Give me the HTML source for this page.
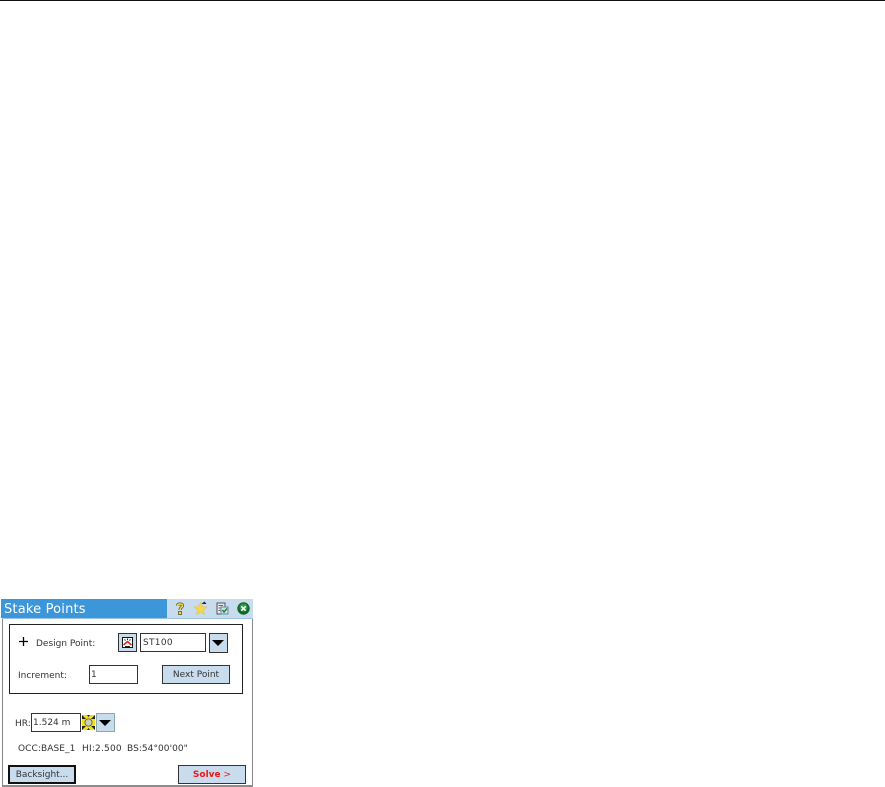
<!DOCTYPE html>
<html>
<head>
<meta charset="utf-8">
<style>
html,body{margin:0;padding:0;background:#fff;width:885px;height:787px;overflow:hidden}
body{position:relative;font-family:"DejaVu Sans","Liberation Sans",sans-serif;color:#333}
.a{position:absolute;box-sizing:border-box}
.t{position:absolute;font-size:9px;line-height:12px;white-space:nowrap;color:#333}
.btn{background:#c9dcee;border:1px solid #333;text-align:center;font-size:9px;color:#333}
.arrow{width:0;height:0;border-left:6px solid transparent;border-right:6px solid transparent;border-top:6px solid #000;position:absolute}
svg{position:absolute}
</style>
</head>
<body>
<div class="a" style="left:0;top:0;width:885px;height:1px;background:#111"></div>

<!-- window -->
<div class="a" style="left:2px;top:599px;width:1px;height:187px;background:#888"></div>
<div class="a" style="left:252px;top:599px;width:1px;height:187px;background:#888"></div>
<div class="a" style="left:2px;top:785px;width:251px;height:2px;background:#8c8c8c"></div>

<!-- title bar -->
<div class="a" style="left:1px;top:599px;width:166px;height:19px;background:#3b97da"></div>
<div class="a" style="left:167px;top:599px;width:86px;height:19px;background:#c9dcee"></div>
<div class="a" style="left:2px;top:618px;width:251px;height:1px;background:#9cc4e4"></div>
<div class="t" style="left:4px;top:601px;font-size:13px;line-height:18px;color:#fff;letter-spacing:.18px">Stake Points</div>

<!-- title icons -->
<svg style="left:174px;top:601px" width="12" height="15" viewBox="0 0 12 15"><path d="M3.500 4.500C3.500 2.500 8.500 2.500 8.500 4.500C8.500 6.500 6 6.500 6 9" fill="none" stroke="#5a5020" stroke-width="3"/><path d="M3.500 4.500C3.500 2.500 8.500 2.500 8.500 4.500C8.500 6.500 6 6.500 6 9" fill="none" stroke="#f2dc50" stroke-width="1.500"/><rect x="4.500" y="10.500" width="3" height="3" fill="#f2dc50" stroke="#5a5020" stroke-width=".8"/></svg>
<svg style="left:194px;top:601px" width="14" height="14" viewBox="0 0 14 14"><path d="M6.500 1.500L8.300 5.500L13 6L9.500 8.800L10.500 13.500L6.500 11L2.500 13.500L3.500 8.800L0 6L4.700 5.500Z" fill="#f6d94a" stroke="#e0c050" stroke-width=".6"/><path d="M7.500 3L10.500 .5L12.500 3Z" fill="#222"/></svg>
<svg style="left:216px;top:602px" width="13" height="13" viewBox="0 0 13 13"><rect x="1" y="1" width="8" height="11" fill="#e8e8e4" stroke="#555"/><path d="M2.500 3.500H7M2.500 6H5M2.500 8.500H5" stroke="#667" stroke-width="1"/><rect x="5" y="5" width="7" height="7" fill="#cfe3ee" stroke="#68a"/><path d="M6.500 8L8 10L11 6.500" fill="none" stroke="#1a8a30" stroke-width="1.500"/></svg>
<svg style="left:237px;top:602px" width="13" height="13" viewBox="0 0 13 13"><circle cx="6.500" cy="6.500" r="6.200" fill="#0e6a28"/><circle cx="6.500" cy="5.500" r="4" fill="#2c9a48"/><path d="M4.300 4.300L8.700 8.700M8.700 4.300L4.300 8.700" stroke="#fff" stroke-width="1.600"/></svg>

<!-- group box -->
<div class="a" style="left:9px;top:624px;width:234px;height:70px;border:1px solid #222"></div>

<svg style="left:18px;top:636px" width="11" height="11" viewBox="0 0 11 11"><path d="M5.500 1V10M1 5.500H10" stroke="#000" stroke-width="1.300"/></svg>
<div class="t" style="left:36px;top:638px">Design Point:</div>

<!-- point picker -->
<div class="a" style="left:118px;top:633px;width:19px;height:19px;background:#c9dcee;border:1px solid #333"></div>
<svg style="left:122px;top:637px" width="11" height="11" viewBox="0 0 11 11"><rect x=".5" y=".5" width="10" height="10" fill="#fff" stroke="#111"/><path d="M1.500 8L5.500 4.500L9.500 8" fill="none" stroke="#e02020" stroke-width="1.500"/><path d="M2.500 2.500L3.500 3.500M8.500 2.500L7.500 3.500M5.500 1.500V3M3 9.500H8" stroke="#222" stroke-width="1"/></svg>

<div class="a" style="left:140px;top:633px;width:66px;height:19px;border:1px solid #333;background:#fff"></div>
<div class="t" style="left:143px;top:637px;letter-spacing:.3px">ST100</div>
<div class="a btn" style="left:209px;top:633px;width:19px;height:20px"></div>
<div class="arrow" style="left:212px;top:640px"></div>

<div class="t" style="left:18px;top:670px">Increment:</div>
<div class="a" style="left:89px;top:665px;width:49px;height:19px;border:1px solid #333;background:#fff"></div>
<div class="t" style="left:91px;top:669px">1</div>
<div class="a btn" style="left:162px;top:665px;width:68px;height:19px;line-height:18px">Next Point</div>

<!-- HR row -->
<div class="t" style="left:15px;top:718px">HR:</div>
<div class="a" style="left:31px;top:713px;width:50px;height:19px;border:1px solid #333;background:#fff"></div>
<div class="t" style="left:33px;top:717px">1.524 m</div>
<svg style="left:82px;top:715px" width="13" height="15" viewBox="0 0 13 15"><rect width="13" height="15" fill="#f2e020"/><path d="M0 0L4 4H0ZM13 0L9 4H13ZM0 15L4 11H0ZM13 15L9 11H13ZM5 0H8L6.500 2ZM5 15H8L6.500 13Z" fill="#222"/><circle cx="6.500" cy="7.500" r="3.600" fill="#c8d0c4" stroke="#555" stroke-width=".8"/></svg>
<div class="a btn" style="left:96px;top:713px;width:19px;height:19px;border-color:#8aa"></div>
<div class="arrow" style="left:99px;top:720px"></div>

<div class="t" style="left:18px;top:743px;letter-spacing:.08px">OCC:BASE_1</div>
<div class="t" style="left:82px;top:743px;letter-spacing:.2px">HI:2.500</div>
<div class="t" style="left:127px;top:743px;letter-spacing:.05px">BS:54°00'00"</div>

<!-- buttons -->
<div class="a btn" style="left:8px;top:765px;width:68px;height:19px;border:2px solid #111;line-height:16px">Backsight...</div>
<div class="a btn" style="left:178px;top:765px;width:68px;height:19px;line-height:18px;color:#f01818"><b>Solve</b> &gt;</div>
</body>
</html>
